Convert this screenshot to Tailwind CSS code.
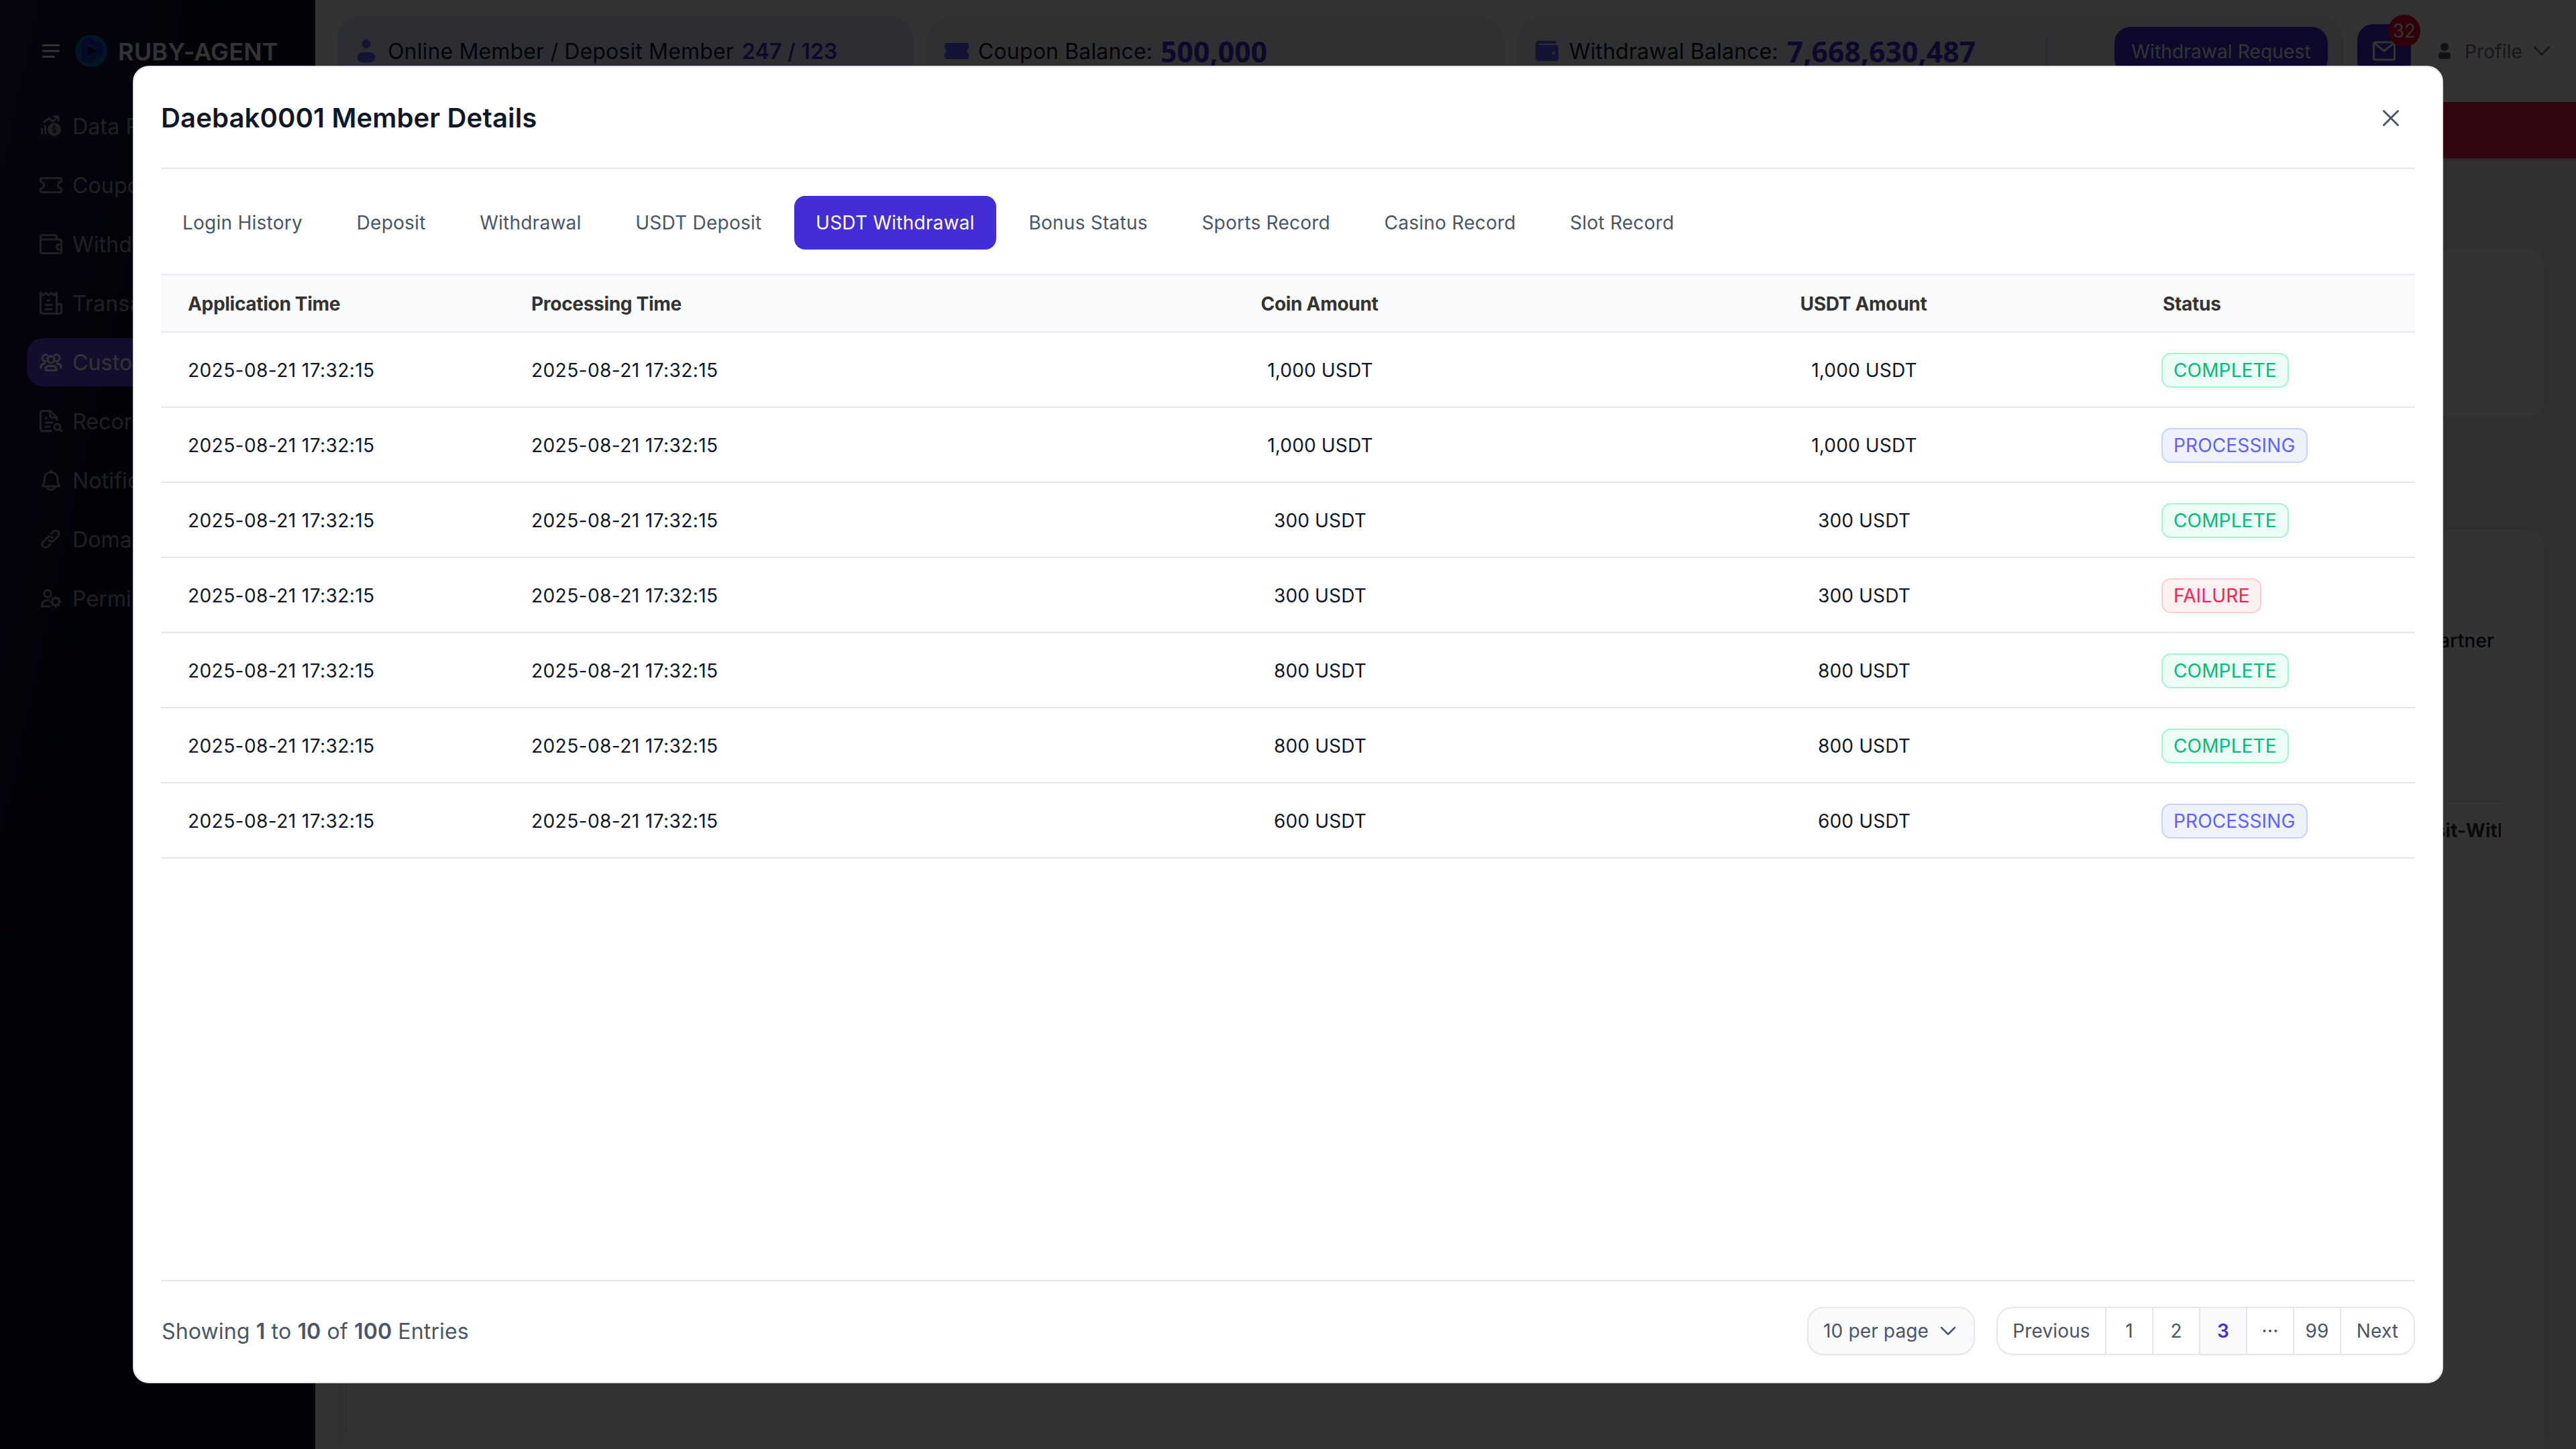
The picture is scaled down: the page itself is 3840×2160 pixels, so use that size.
<!DOCTYPE html>
<html lang="en">
<head>
  <meta charset="UTF-8" />
  <meta name="viewport" content="width=device-width, initial-scale=1.0"/>
  <title>Member Details</title>
  <script src="https://cdn.jsdelivr.net/npm/@tailwindcss/browser@4"></script>
</head>
<body class="relative w-[3840px] h-[2160px] overflow-hidden font-['Inter',sans-serif] text-[28px] leading-[40px] tracking-[0.15px] text-gray-900">

  <!-- Page -->
  <div class="flex h-full">
    <aside class="w-[470px] shrink-0 h-full bg-linear-to-br from-[#211a4d] via-[#0b0a28] via-40% to-[#0a0a30] text-gray-400 text-[32px]">
      <div class="h-[152px] pl-[60px] flex items-center text-white">
        <svg class="w-8 h-8" viewBox="0 0 32 32" fill="none" stroke="currentColor" stroke-width="3" stroke-linecap="round"><path d="M4.500 7.500h23M4.500 16h23M4.500 24.500h16"/></svg>
        <svg class="w-12 h-12 ml-5" viewBox="0 0 48 48" fill="none">
          <circle cx="24" cy="24" r="24" fill="#0070b8"/>
          <path d="M14 36V14c0-5 5-6 9-4l11 6c5 3 4 7 0 9l-9 6" stroke="#1a2ccc" stroke-width="9" stroke-linecap="round" stroke-linejoin="round"/>
          <path d="M14 35c4 5 9 3 13 0l8-5" stroke="#0a44b4" stroke-width="8" stroke-linecap="round"/>
          <path d="M19 16v15l13-7.500z" fill="#070b2c"/>
        </svg>
        <span class="ml-4 pt-px text-[36px] font-semibold">RUBY-AGENT</span>
      </div>
      <nav class="flex flex-col gap-4 pl-10 pr-10">
        <a class="flex items-center gap-3 h-[72px] px-4">
          <svg class="w-10 h-10 shrink-0" viewBox="0 0 40 40" fill="none" stroke="currentColor" stroke-width="3" stroke-linecap="round" stroke-linejoin="round"><path d="M10 14l7-6 6 5 7-7M24.500 5.500H31V12M6.500 24v7M11.500 20v11"/><circle cx="25" cy="25" r="10" fill="currentColor" stroke="none"/><path d="M27.500 22.500c-1.500-1.800-5-1.300-5 .7 0 2.500 5.200 1.300 5.200 3.800 0 2-3.700 2.400-5.200.5M25 19.500v1.500M25 28.800v1.500" stroke="#14123a" stroke-width="1.800"/></svg>
          <span class="pt-0.5 whitespace-nowrap">Data Report</span>
        </a>
        <a class="flex items-center gap-3 h-[72px] px-4">
          <svg class="w-10 h-10 shrink-0" viewBox="0 0 40 40" fill="none" stroke="currentColor" stroke-width="3" stroke-linejoin="round"><path d="M4.500 11.500q0-2 2-2h27q2 0 2 2v3.500q-5 .5-5 5t5 5v3.500q0 2-2 2h-27q-2 0-2-2V25q5-.5 5-5t-5-5z"/></svg>
          <span class="pt-0.5">Coupon</span>
        </a>
        <a class="flex items-center gap-3 h-[72px] px-4">
          <svg class="w-10 h-10 shrink-0" viewBox="0 0 40 40" fill="none" stroke="currentColor" stroke-width="3" stroke-linejoin="round"><path d="M28.500 13V9.500q0-3-3-3h-18q-3 0-3 3v21q0 3 3 3h25q3 0 3-3V16q0-3-3-3h-28M35.500 20.500h-3.300a3.800 3.800 0 0 0 0 7.600h3.300"/></svg>
          <span class="pt-0.5">Withdrawal</span>
        </a>
        <a class="flex items-center gap-3 h-[72px] px-4">
          <svg class="w-10 h-10 shrink-0" viewBox="0 0 40 40" fill="none" stroke="currentColor" stroke-width="3" stroke-linecap="round" stroke-linejoin="round"><path d="M28.500 35.500V4.500l-4 3.500-4-3.500-4 3.500-4-3.500L8.500 8l-4-3.500v28q0 3 3 3h25q3 0 3-3V21.500h-7M12 22.500h9M12 29h9M15.500 15.500h2"/></svg>
          <span class="pt-0.5">Transaction</span>
        </a>
        <a class="flex items-center gap-3 h-[72px] px-4 rounded-3xl bg-[#6a42e4] text-white">
          <svg class="w-10 h-10 shrink-0" viewBox="0 0 40 40" fill="none" stroke="currentColor" stroke-width="3" stroke-linecap="round" stroke-linejoin="round"><circle cx="20" cy="16" r="5"/><path d="M12 32q0-6.500 5-6.500h6q5 0 5 6.500zM12.500 18.500a5 5 0 1 1 2.500-9M27.500 18.500a5 5 0 1 0-2.500-9M5 28q0-6 6-6M35 28q0-6-6-6"/></svg>
          <span class="pt-0.5">Customer</span>
        </a>
        <a class="flex items-center gap-3 h-[72px] px-4">
          <svg class="w-10 h-10 shrink-0" viewBox="0 0 40 40" fill="none" stroke="currentColor" stroke-width="3" stroke-linecap="round" stroke-linejoin="round"><path d="M20 34.500H7.500q-3 0-3-3v-24q0-3 3-3H19l10 10V18M18.500 5v6q0 3.500 3.500 3.500h6M12 22h10M12 28h6M12 15.500h1.500"/><circle cx="29.500" cy="28.500" r="4.500"/><path d="M33 32l2.500 2.500"/></svg>
          <span class="pt-0.5">Record</span>
        </a>
        <a class="flex items-center gap-3 h-[72px] px-4">
          <svg class="w-10 h-10 shrink-0" viewBox="0 0 40 40" fill="none" stroke="currentColor" stroke-width="3" stroke-linecap="round" stroke-linejoin="round"><path d="M20 5v3M20 8c-6 0-9.500 4-9.500 9.500 0 6-1 8-3 11.500h25c-2-3.500-3-5.500-3-11.500C29.500 12 26 8 20 8zM14.500 30.500c1.500 4.800 9.500 4.800 11 0"/></svg>
          <span class="pt-0.5">Notification</span>
        </a>
        <a class="flex items-center gap-3 h-[72px] px-4">
          <svg class="w-10 h-10 shrink-0" viewBox="0 0 40 40" fill="none" stroke="currentColor" stroke-width="3" stroke-linecap="round" stroke-linejoin="round"><path d="M16.500 21.500c2.500 2.500 6 2 8 0l6-6c5-5-2-12-7-7l-3 3M22.500 17.500c-2.500-2.500-6-2-8 0l-6 6c-5 5 2 12 7 7l3-3"/></svg>
          <span class="pt-0.5">Domain</span>
        </a>
        <a class="flex items-center gap-3 h-[72px] px-4">
          <svg class="w-10 h-10 shrink-0" viewBox="0 0 40 40" fill="none" stroke="currentColor" stroke-width="3" stroke-linecap="round" stroke-linejoin="round"><circle cx="15" cy="13" r="5.200"/><path d="M17.500 32h-11q0-9 7-9h4"/><circle cx="27" cy="25" r="5.200"/><path d="M27 17.800v1.500M27 30.700v1.500M19.800 25h1.500M32.700 25h1.500M22 20l1 1M31 29l1 1M32 20l-1 1M22 30l1-1"/></svg>
          <span class="pt-0.5">Permission</span>
        </a>
      </nav>
    </aside>

    <div class="w-[3370px] flex flex-col bg-linear-to-r from-[#fafafa] to-[#f0f0f4]">
      <header class="h-[152px] shrink-0 bg-white flex items-center pl-8">
        <div class="flex items-center w-[860px] h-[104px] rounded-[36px] bg-indigo-100 pl-7 text-[32px]">
          <svg class="w-8 h-10 shrink-0 text-indigo-500" viewBox="0 0 32 40" fill="currentColor"><circle cx="16" cy="9.500" r="6.500"/><rect x="2.500" y="22" width="27" height="15" rx="7.500"/></svg>
          <span class="ml-4 pt-0.5 whitespace-nowrap">Online Member / Deposit Member</span>
          <span class="ml-3 pt-0.5 whitespace-nowrap font-semibold text-indigo-700">247 / 123</span>
        </div>
        <div class="ml-5 flex items-center w-[860px] h-[104px] rounded-[36px] bg-[#f1f1f7] pl-[26px] text-[32px]">
          <svg class="w-9 h-6 shrink-0 text-indigo-500" viewBox="0 0 36 24" fill="currentColor"><path d="M3 0h30q3 0 3 3v5q-2.500 1-2.500 4t2.500 4v5q0 3-3 3H3q-3 0-3-3v-5q2.500-1 2.500-4T0 8V3q0-3 3-3z"/></svg>
          <span class="ml-3.5 pt-0.5 whitespace-nowrap">Coupon Balance:</span>
          <span class="ml-3 pt-0.5 font-['Noto_Sans',sans-serif] text-[42.500px] font-bold text-indigo-700">500,000</span>
        </div>
        <div class="ml-5 flex items-center w-[1232px] h-[104px] rounded-[36px] bg-[#f1f1f7] pl-[27px] text-[32px]">
          <svg class="w-[34px] h-[30px] shrink-0 text-indigo-500" viewBox="0 0 34 30" fill="currentColor"><path fill-rule="evenodd" d="M4 0h25q2.500 0 2.500 2T29 4H5v2h24q5 0 5 5v15q0 4-4 4H4q-4 0-4-4V4q0-4 4-4zM27 15.800a2.200 2.200 0 1 0 .010 0z"/></svg>
          <span class="ml-4 pt-0.5 whitespace-nowrap">Withdrawal Balance:</span>
          <span class="ml-[13px] pt-0.5 font-['Noto_Sans',sans-serif] text-[42.500px] font-bold text-indigo-700">7,668,630,487</span>
          <span class="ml-auto w-[3px] h-11 bg-indigo-200"></span>
          <span class="ml-[100px] mr-6 w-[318px] h-[72px] rounded-3xl bg-indigo-700 text-white text-[28px] whitespace-nowrap flex items-center justify-center pt-0.5">Withdrawal Request</span>
        </div>
        <div class="relative ml-5 w-20 h-20 rounded-3xl bg-indigo-700 text-white flex items-center justify-center">
          <svg class="w-[34px] h-[30px]" viewBox="0 0 34 30" fill="none" stroke="currentColor" stroke-width="3" stroke-linejoin="round"><rect x="1.500" y="2" width="31" height="26" rx="2"/><path d="M3 4l14 11L31 4"/></svg>
          <span class="absolute -top-3.5 -right-3.5 w-12 h-12 rounded-full bg-rose-600 flex items-center justify-center">32</span>
        </div>
        <div class="flex items-center ml-10 text-gray-500">
          <svg class="w-5 h-7 text-gray-600" viewBox="0 0 20 28" fill="currentColor"><circle cx="10" cy="8" r="6"/><rect x="1" y="16" width="18" height="10" rx="4"/></svg>
          <span class="ml-5 pt-0.5">Profile</span>
          <svg class="w-6 h-6 ml-[17px]" viewBox="0 0 24 24" fill="none" stroke="currentColor" stroke-width="3" stroke-linecap="round" stroke-linejoin="round"><path d="M1.500 6.500L12 17.500l10.500-11"/></svg>
        </div>
      </header>
      <div class="h-[84px] shrink-0 bg-rose-500 shadow-md"></div>
      <main class="flex flex-col flex-1 min-h-0 pl-12 pr-12">
        <section class="mt-[136px] h-[250px] shrink-0 rounded-3xl bg-white shadow-[0_0_30px_#dfe5ef]"></section>
        <section class="mt-[168px] flex-1 rounded-t-3xl bg-white shadow-[0_0_30px_#dfe5ef] px-16">
          <div class="mt-[145px] text-right pr-[10px] font-medium">Partner</div>
          <div class="mt-[170px] h-12 border-t-2 border-[#f8f8f8]"></div>
          <div class="h-[88px] border-y-2 border-gray-200 flex items-center justify-end overflow-hidden font-bold text-[#333]">
            <span class="-mr-[82px] pt-0.5 whitespace-nowrap">Deposit-Withdraw</span>
          </div>
        </section>
      </main>
    </div>
  </div>

  <!-- Modal -->
  <div class="absolute inset-0 bg-black/80 flex pt-[98px] justify-center items-start">
    <div class="w-[3444px] h-[1964px] rounded-3xl border-2 border-gray-200 bg-white px-10 flex flex-col">
      <div class="h-[152px] shrink-0 border-b-2 border-gray-200 flex items-center justify-between pr-5">
        <h2 class="pt-0.5 text-[40px] font-semibold">Daebak0001 Member Details</h2>
        <svg class="w-8 h-8 text-gray-600" viewBox="0 0 32 32" fill="none" stroke="currentColor" stroke-width="3" stroke-linecap="round"><path d="M5.500 6.500l21 21M26.500 6.500l-21 21"/></svg>
      </div>

      <div id="tabs" class="mt-10 h-20 shrink-0 flex gap-[16.600px] text-gray-600 tracking-[0.250px]"></div>

      <table class="mt-9 w-full table-fixed border-collapse text-left">
        <colgroup>
          <col class="w-[512px]"><col class="w-[808px]"><col class="w-[814px]"><col class="w-[808px]"><col class="w-[418px]">
        </colgroup>
        <thead>
          <tr class="h-[86px] bg-gray-50 text-[#333] border-y-2 border-gray-200 tracking-[-0.300px]">
            <th class="pl-10 pt-0.5 font-bold">Application Time</th>
            <th class="pl-10 pt-0.5 font-bold">Processing Time</th>
            <th class="pt-0.5 text-center font-bold">Coin Amount</th>
            <th class="pt-0.5 text-center font-bold">USDT Amount</th>
            <th class="pl-[42px] pt-0.5 font-bold">Status</th>
          </tr>
        </thead>
        <tbody id="rows"></tbody>
      </table>

      <div class="mt-auto h-[152px] shrink-0 border-t-2 border-gray-200 flex items-center text-gray-600 pb-0.5">
        <p class="pl-px pt-0.5 text-[32px]">Showing <b class="font-semibold">1</b> to <b class="font-semibold">10</b> of <b class="font-semibold">100</b> Entries</p>
        <div class="ml-auto h-[72px] w-[250px] px-[22px] rounded-3xl border-2 border-gray-200 bg-gray-50 shadow-xs flex items-center justify-between whitespace-nowrap">
          10 per page
          <svg class="w-6 h-6 mr-1" viewBox="0 0 24 24" fill="none" stroke="currentColor" stroke-width="2.500" stroke-linecap="round" stroke-linejoin="round"><path d="M2 7l10 10L22 7"/></svg>
        </div>
        <div class="ml-8 h-[72px] w-[624px] rounded-3xl border-2 border-gray-200 shadow-xs flex overflow-hidden divide-x-2 divide-gray-200">
          <span class="flex-1 flex items-center justify-center">Previous</span>
          <span class="w-[70px] flex items-center justify-center">1</span>
          <span class="w-[70px] flex items-center justify-center">2</span>
          <span class="w-[70px] flex items-center justify-center bg-gray-50 text-indigo-700 font-semibold">3</span>
          <span class="w-[70px] flex items-center justify-center">
            <svg class="w-6 h-6" viewBox="0 0 24 24" fill="currentColor"><circle cx="3.500" cy="12" r="2"/><circle cx="12" cy="12" r="2"/><circle cx="20.500" cy="12" r="2"/></svg>
          </span>
          <span class="w-[70px] flex items-center justify-center">99</span>
          <span class="w-[108px] flex items-center justify-center">Next</span>
        </div>
      </div>
    </div>
  </div>

  <script>
    const tabs = ['Login History', 'Deposit', 'Withdrawal', 'USDT Deposit', 'USDT Withdrawal', 'Bonus Status', 'Sports Record', 'Casino Record', 'Slot Record'];
    const activeTab = 'USDT Withdrawal';

    const statusStyles = {
      COMPLETE: 'bg-emerald-50 border-emerald-200 text-emerald-500',
      PROCESSING: 'bg-indigo-50 border-indigo-200 text-indigo-500',
      FAILURE: 'bg-rose-50 border-rose-200 text-rose-500',
    };

    const rows = [
      ['1,000', 'COMPLETE'],
      ['1,000', 'PROCESSING'],
      ['300', 'COMPLETE'],
      ['300', 'FAILURE'],
      ['800', 'COMPLETE'],
      ['800', 'COMPLETE'],
      ['600', 'PROCESSING'],
    ];

    tabs.forEach(name => {
      const tab = document.createElement('button');
      tab.textContent = name;
      tab.className = 'px-8 rounded-2xl whitespace-nowrap';
      if (name === activeTab) tab.className += ' bg-indigo-700 text-white';
      document.getElementById('tabs').appendChild(tab);
    });

    rows.forEach(([amount, status]) => {
      const tr = document.createElement('tr');
      tr.className = 'h-[112px] border-b-2 border-gray-200';
      tr.innerHTML = `
        <td class="pl-10 pt-0.5 tracking-[0.440px]">2025-08-21 17:32:15</td>
        <td class="pl-10 pt-0.5 tracking-[0.440px]">2025-08-21 17:32:15</td>
        <td class="pl-0.5 pt-0.5 text-center">${amount} USDT</td>
        <td class="pl-0.5 pt-0.5 text-center">${amount} USDT</td>
        <td class="pl-10 pt-0.5"><span class="inline-flex items-center h-[52px] px-4 rounded-[14px] border-2 align-middle ${statusStyles[status]}">${status}</span></td>`;
      document.getElementById('rows').appendChild(tr);
    });
  </script>

</body>
</html>
